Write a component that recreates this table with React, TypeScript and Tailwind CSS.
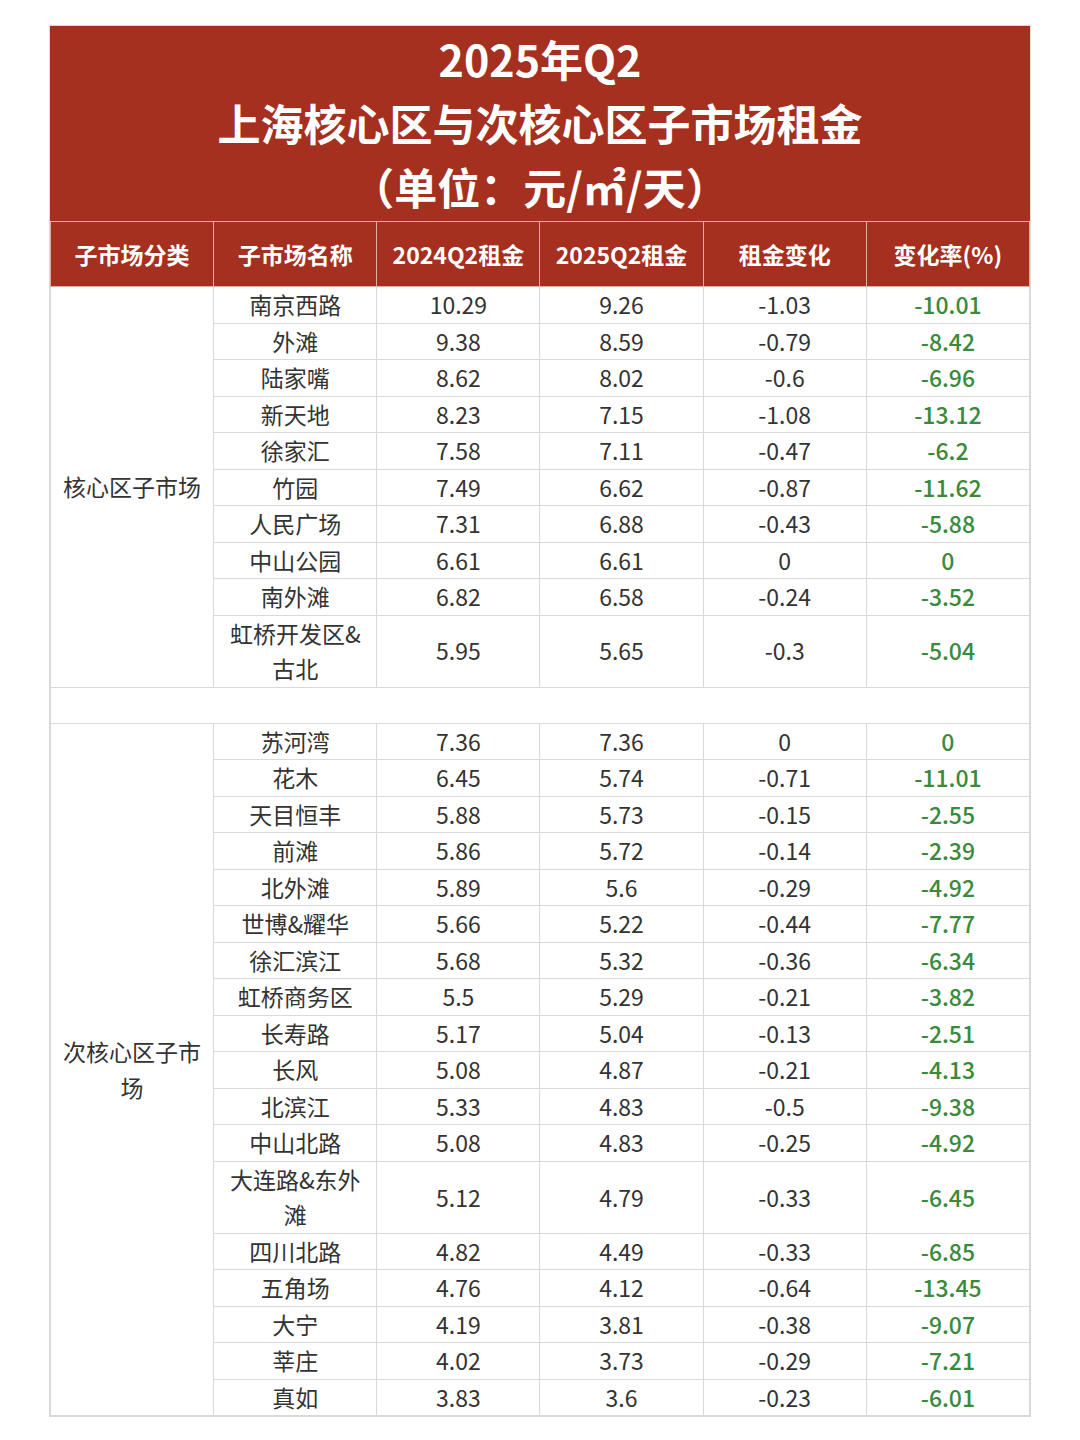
import React from "react";

type Row = [string, string, string, string, string];

const core: Row[] = [
  ["南京西路", "10.29", "9.26", "-1.03", "-10.01"],
  ["外滩", "9.38", "8.59", "-0.79", "-8.42"],
  ["陆家嘴", "8.62", "8.02", "-0.6", "-6.96"],
  ["新天地", "8.23", "7.15", "-1.08", "-13.12"],
  ["徐家汇", "7.58", "7.11", "-0.47", "-6.2"],
  ["竹园", "7.49", "6.62", "-0.87", "-11.62"],
  ["人民广场", "7.31", "6.88", "-0.43", "-5.88"],
  ["中山公园", "6.61", "6.61", "0", "0"],
  ["南外滩", "6.82", "6.58", "-0.24", "-3.52"],
  ["虹桥开发区&古北", "5.95", "5.65", "-0.3", "-5.04"],
];

const sub: Row[] = [
  ["苏河湾", "7.36", "7.36", "0", "0"],
  ["花木", "6.45", "5.74", "-0.71", "-11.01"],
  ["天目恒丰", "5.88", "5.73", "-0.15", "-2.55"],
  ["前滩", "5.86", "5.72", "-0.14", "-2.39"],
  ["北外滩", "5.89", "5.6", "-0.29", "-4.92"],
  ["世博&耀华", "5.66", "5.22", "-0.44", "-7.77"],
  ["徐汇滨江", "5.68", "5.32", "-0.36", "-6.34"],
  ["虹桥商务区", "5.5", "5.29", "-0.21", "-3.82"],
  ["长寿路", "5.17", "5.04", "-0.13", "-2.51"],
  ["长风", "5.08", "4.87", "-0.21", "-4.13"],
  ["北滨江", "5.33", "4.83", "-0.5", "-9.38"],
  ["中山北路", "5.08", "4.83", "-0.25", "-4.92"],
  ["大连路&东外滩", "5.12", "4.79", "-0.33", "-6.45"],
  ["四川北路", "4.82", "4.49", "-0.33", "-6.85"],
  ["五角场", "4.76", "4.12", "-0.64", "-13.45"],
  ["大宁", "4.19", "3.81", "-0.38", "-9.07"],
  ["莘庄", "4.02", "3.73", "-0.29", "-7.21"],
  ["真如", "3.83", "3.6", "-0.23", "-6.01"],
];

const headers = ["子市场分类", "子市场名称", "2024Q2租金", "2025Q2租金", "租金变化", "变化率(%)"];

const td = "border border-[#d9d9d9] px-[8px] py-0 text-center align-middle leading-[35.5px]";

const Section = ({ label, rows }: { label: string; rows: Row[] }) => (
  <>
    {rows.map((r, i) => (
      <tr key={r[0]} className="h-[36.4px]">
        {i === 0 && (
          <td rowSpan={rows.length} className={td}>
            {label}
          </td>
        )}
        <td className={td}>{r[0]}</td>
        <td className={td}>{r[1]}</td>
        <td className={td}>{r[2]}</td>
        <td className={td}>{r[3]}</td>
        <td className={`${td} text-[#3a8a3c] font-medium`}>{r[4]}</td>
      </tr>
    ))}
  </>
);

export default function App() {
  return (
    <div
      className="w-[1080px] h-[1440px] bg-white pt-[25px]"
      style={{ fontFamily: '"Noto Sans CJK SC", "Noto Sans", sans-serif' }}
    >
      <div className="w-[982px] ml-[49px] border border-[#d9d9d9]">
        <div className="bg-[#a5301f] text-white font-semibold text-[43px] leading-[64px] text-center pt-0 pb-[3px]">
          <div>2025年Q2</div>
          <div>上海核心区与次核心区子市场租金</div>
          <div>（单位：元/㎡/天）</div>
        </div>
        <table className="w-full table-fixed border-collapse text-[23px] text-[#333]">
          <thead>
            <tr className="h-[65px] bg-[#a5301f] text-white">
              {headers.map((h) => (
                <th key={h} className="border border-[#d9b0a8] font-semibold text-center align-middle">
                  {h}
                </th>
              ))}
            </tr>
          </thead>
          <tbody>
            <Section label="核心区子市场" rows={core} />
            <tr className="h-[36.4px]">
              <td colSpan={6} className="border border-[#d9d9d9]"></td>
            </tr>
            <Section label="次核心区子市场" rows={sub} />
          </tbody>
        </table>
      </div>
    </div>
  );
}
